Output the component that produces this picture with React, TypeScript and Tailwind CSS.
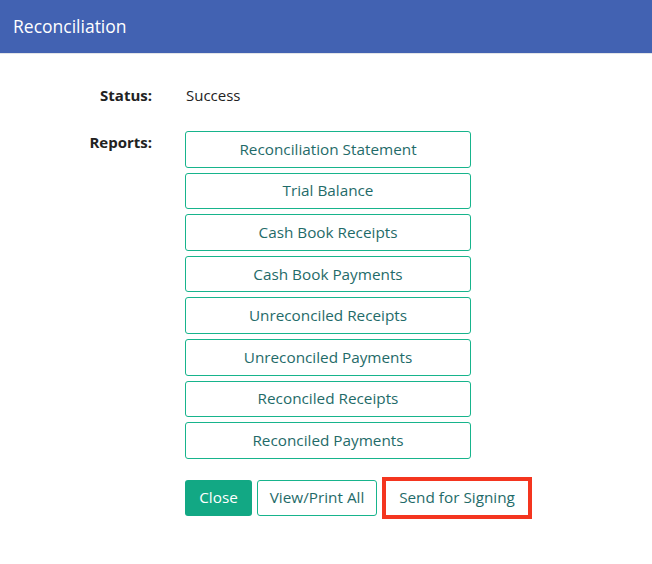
import React from "react";

const reports = [
  "Reconciliation Statement",
  "Trial Balance",
  "Cash Book Receipts",
  "Cash Book Payments",
  "Unreconciled Receipts",
  "Unreconciled Payments",
  "Reconciled Receipts",
  "Reconciled Payments",
];

export default function App() {
  return (
    <div
      className="w-[652px] h-[564px] bg-white"
      style={{ fontFamily: '"Open Sans", "Noto Sans", sans-serif' }}
    >
      <div className="h-[54px] bg-[#4262b2] flex items-center pl-[13px] text-white text-[17.5px] border-b border-[#e2e4e8]">
        Reconciliation
      </div>
      <div className="pt-[30px]">
        <div className="flex items-center h-[22px]">
          <div className="w-[152px] text-right font-bold text-[15px] text-[#222]">Status:</div>
          <div className="ml-[34px] text-[15px] text-[#222]">Success</div>
        </div>
        <div className="flex mt-[25px]">
          <div className="w-[152px] text-right font-bold text-[15px] text-[#222] leading-[22px]">Reports:</div>
          <div className="ml-[33px] flex flex-col gap-[5px]">
            {reports.map((r) => (
              <button
                key={r}
                className="w-[286px] h-[36.6px] border border-[#17b48c] rounded-[3px] text-[15.3px] text-[#1f6b69] flex items-center justify-center bg-white"
              >
                {r}
              </button>
            ))}
            <div className="flex items-center mt-[13px] gap-[5px]">
              <button className="h-[36px] w-[67px] rounded-[3px] bg-[#12a884] text-white text-[15.3px] flex items-center justify-center">
                Close
              </button>
              <button className="h-[36px] w-[120px] rounded-[3px] border border-[#17b48c] text-[#1f6b69] text-[15.3px] flex items-center justify-center bg-white">
                View/Print All
              </button>
              <button className="h-[42px] w-[150px] border-[4px] border-[#f4351f] text-[#1f6b69] text-[15.3px] flex items-center justify-center bg-white">
                Send for Signing
              </button>
            </div>
          </div>
        </div>
      </div>
    </div>
  );
}
